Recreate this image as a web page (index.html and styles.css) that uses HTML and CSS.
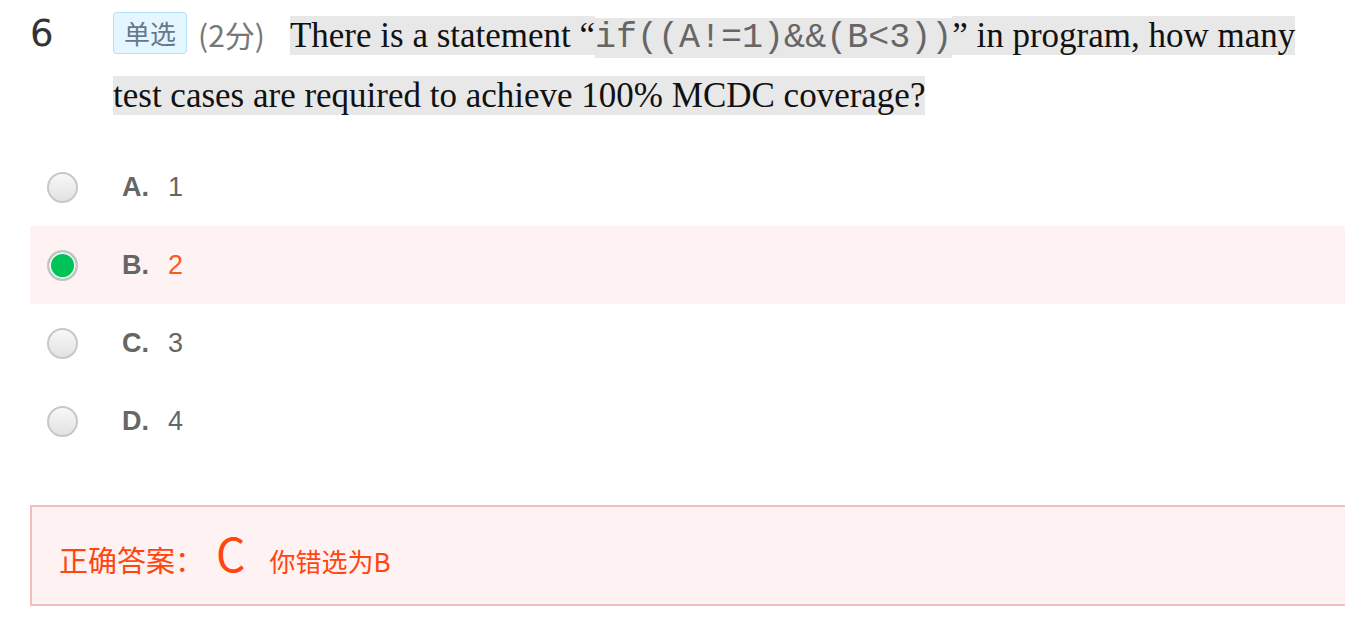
FILE: index.html
```html
<!DOCTYPE html>
<html lang="zh-CN">
<head>
<meta charset="utf-8">
<title>Question 6</title>
<link rel="stylesheet" href="styles.css">
</head>
<body>
<div class="question">
  <div class="num">6</div>
  <div class="stem"><span class="tag">单选</span><span class="score">(2分)</span><span class="hl">There is a statement “</span><span class="code">if((A!=1)&amp;&amp;(B&lt;3))</span><span class="hl">” in program, how many test cases are required to achieve 100% MCDC coverage?</span></div>
</div>
<div class="options">
  <div class="option">
    <span class="radio"></span>
    <span class="label">A.</span><span class="value">1</span>
  </div>
  <div class="option option-picked">
    <span class="radio radio-on"></span>
    <span class="label">B.</span><span class="value value-picked">2</span>
  </div>
  <div class="option">
    <span class="radio"></span>
    <span class="label">C.</span><span class="value">3</span>
  </div>
  <div class="option">
    <span class="radio"></span>
    <span class="label">D.</span><span class="value">4</span>
  </div>
</div>
<div class="answer">
  <span class="answer-title">正确答案：</span><span class="answer-key">C</span><span class="answer-mine">你错选为B</span>
</div>
</body>
</html>
```
FILE: styles.css
```css
html, body {
  margin: 0;
  padding: 0;
  background: #fff;
  overflow: hidden;
}
body {
  font-family: "Liberation Sans", Arial, sans-serif;
  width: 1345px;
}
.question {
  display: flex;
  padding-top: 6px;
}
.num {
  width: 83px;
  padding-left: 30px;
  margin-top: 7px;
  font-family: "DejaVu Sans", "Liberation Sans", sans-serif;
  font-size: 37px;
  line-height: 42px;
  color: #333;
  flex: none;
}
.stem {
  flex: 1;
  padding-right: 20px;
  font-family: "Liberation Serif", "Times New Roman", serif;
  font-size: 35px;
  line-height: 60px;
  color: #111;
}
.tag {
  display: inline-block;
  font-family: "Noto Sans CJK SC", sans-serif;
  font-size: 26px;
  line-height: 40px;
  padding: 0 10px;
  border: 1px solid #b3dff8;
  border-radius: 4px;
  background: #e4f6ff;
  color: #66788a;
  vertical-align: 3px;
}
.score {
  font-family: "Noto Sans CJK SC", sans-serif;
  font-size: 30px;
  line-height: 40px;
  color: #777;
  margin: 0 25px 0 11px;
}
.hl {
  background: #e8e8e8;
}
.code {
  font-family: "Liberation Mono", "Courier New", monospace;
  font-size: 35px;
  line-height: 40px;
  color: #666;
  background: #e8e8e8;
}
.options {
  margin-top: 22px;
}
.option {
  display: flex;
  align-items: center;
  height: 78px;
  margin-left: 30px;
}
.option-picked {
  background: #fff2f2;
}
.radio {
  flex: none;
  box-sizing: border-box;
  width: 31px;
  height: 31px;
  margin-left: 17px;
  margin-right: 44px;
  border-radius: 50%;
  border: 2px solid #c8c8c8;
  background: linear-gradient(#f8f8f8, #e2e2e2);
}
.radio-on {
  border: 2px solid #c4c4c4;
  background: #00c357;
  box-shadow: inset 0 0 0 2px #f2f2f2;
}
.label {
  font-size: 27px;
  font-weight: bold;
  color: #666;
}
.value {
  font-size: 27px;
  color: #666;
  margin-left: 19px;
}
.value-picked {
  color: #f95a20;
}
.answer {
  box-sizing: border-box;
  display: flex;
  align-items: baseline;
  height: 101px;
  margin: 45px 0 0 30px;
  width: 1330px;
  padding: 12px 0 0 27px;
  border: 2px solid #f5bdbd;
  background: #fff2f2;
  font-family: "Noto Sans CJK SC", sans-serif;
  color: #ff4510;
}
.answer-title {
  font-size: 29px;
}
.answer-key {
  font-size: 46px;
  margin-left: 12px;
  margin-right: 24px;
}
.answer-mine {
  font-size: 26px;
}
```
